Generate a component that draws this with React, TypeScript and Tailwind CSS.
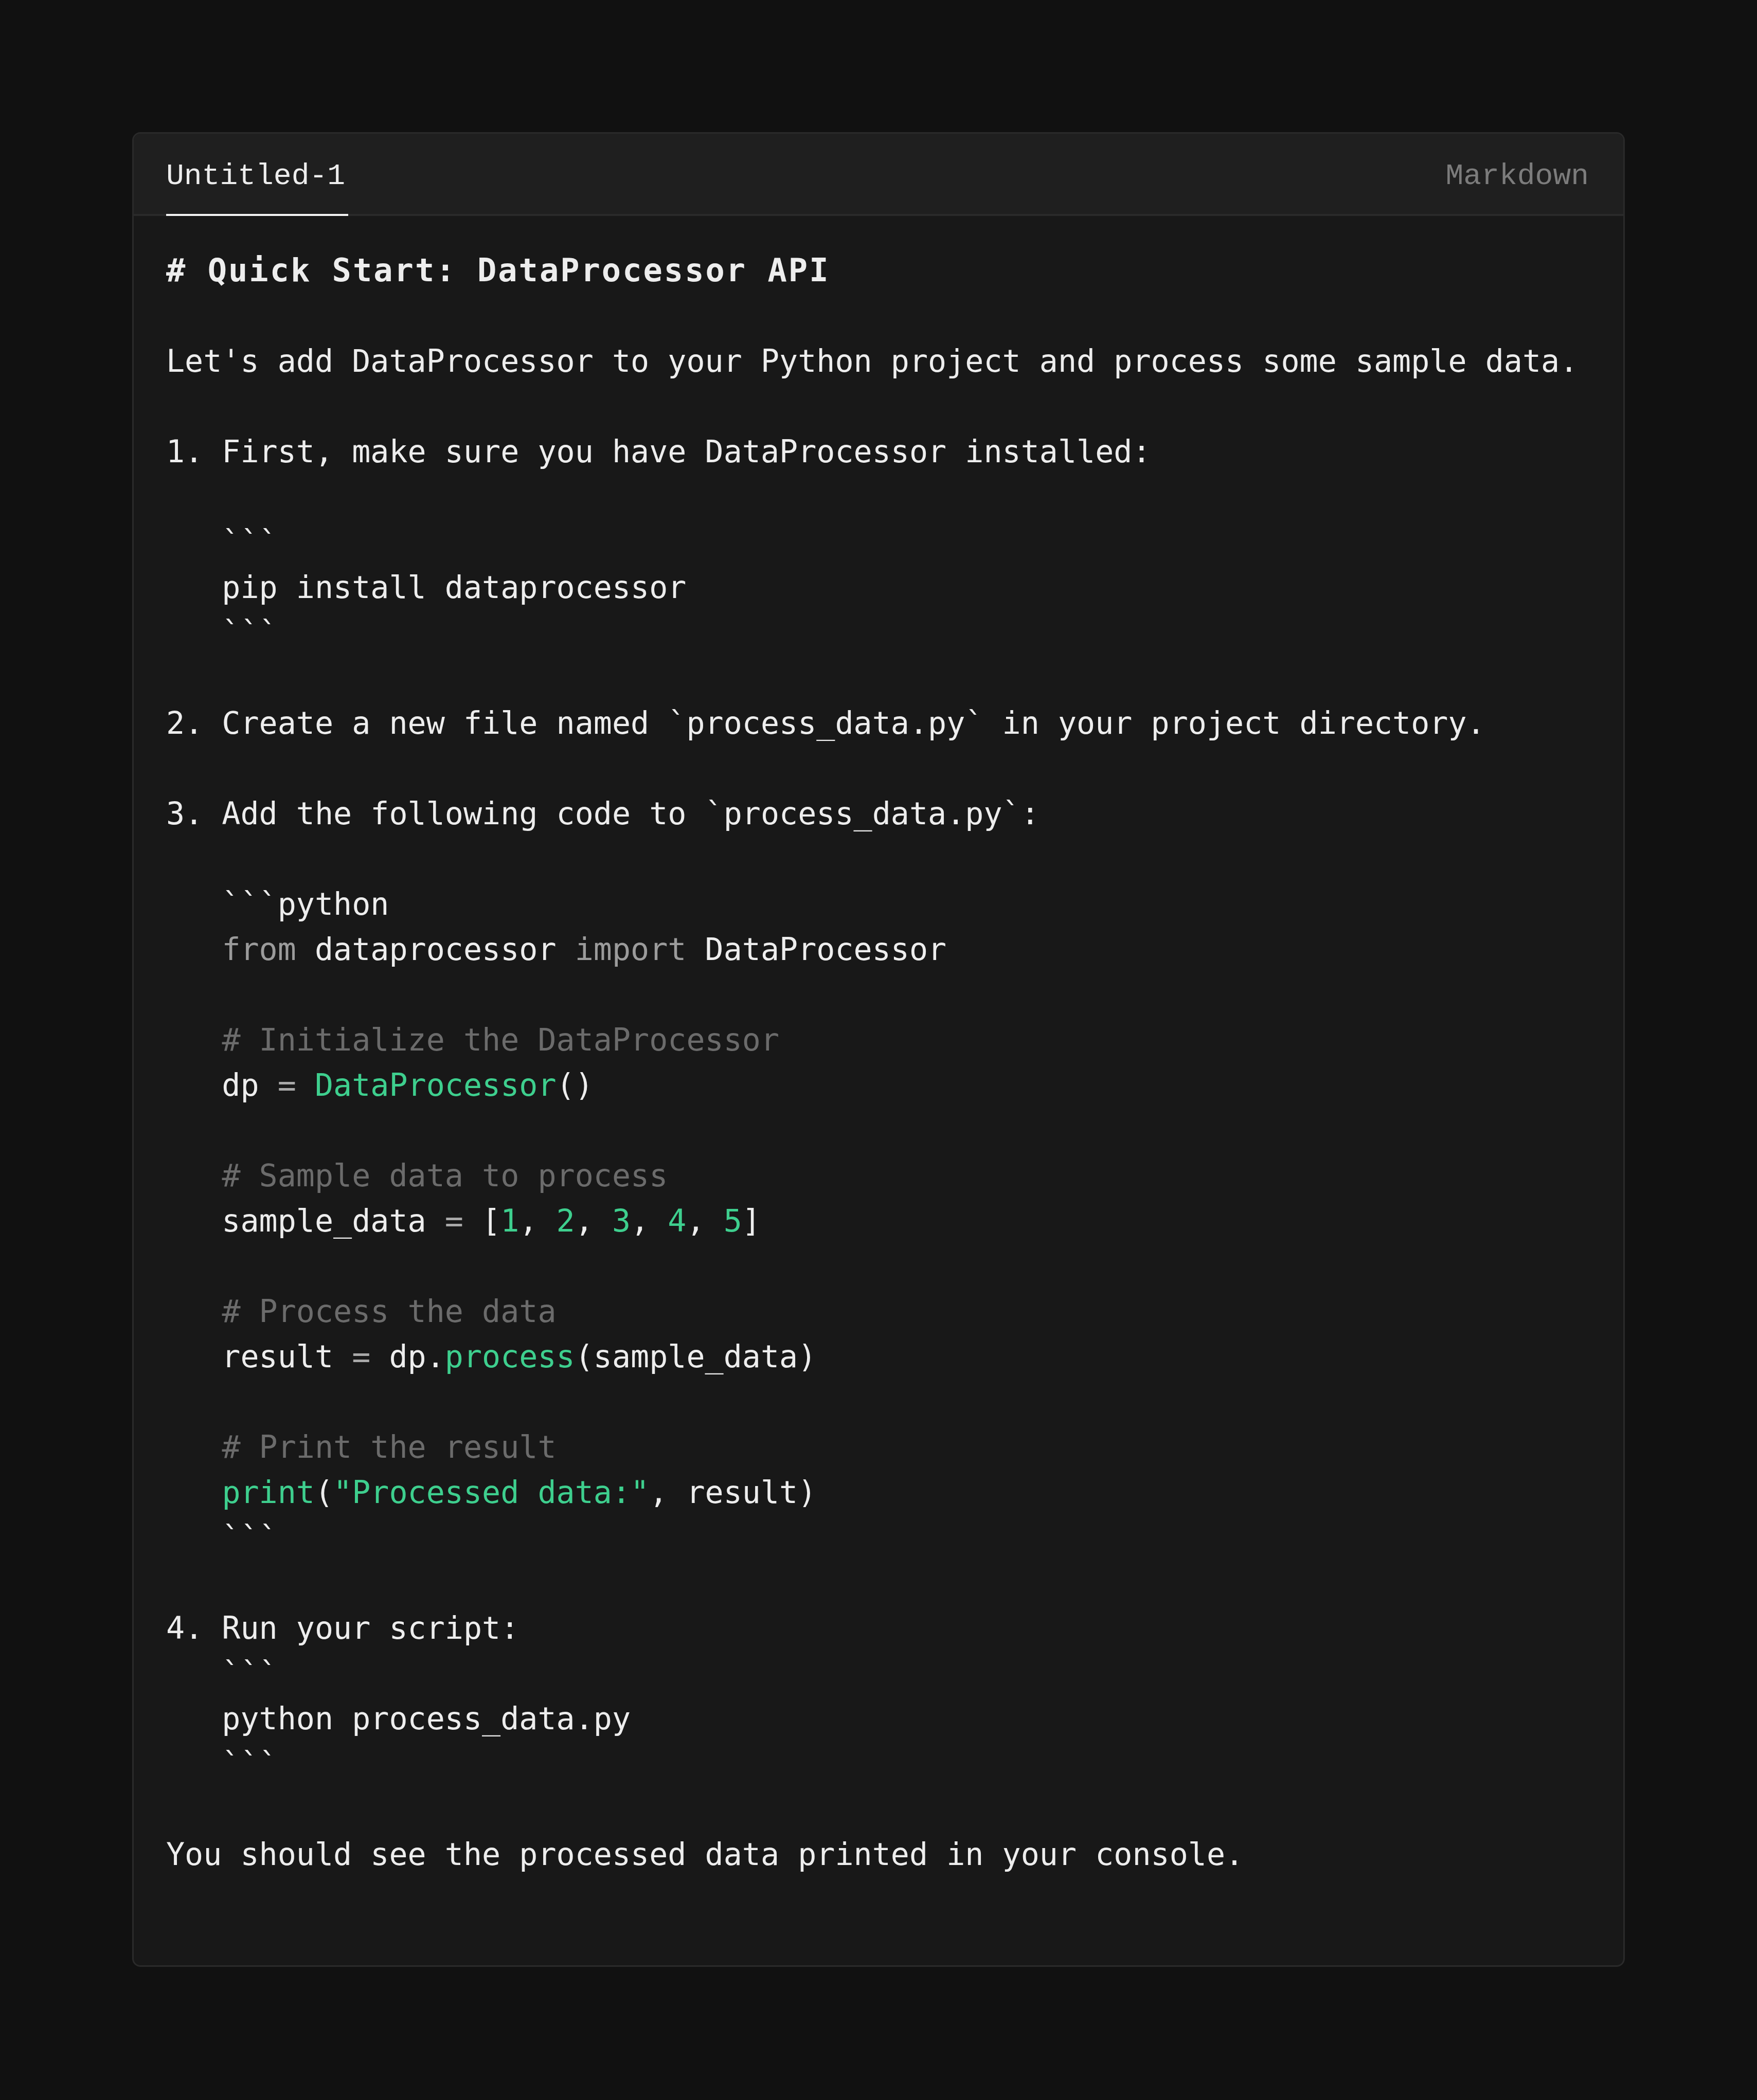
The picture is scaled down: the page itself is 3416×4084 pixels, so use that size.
import type { ReactNode } from "react";

const mono = "font-['DejaVu_Sans_Mono','Liberation_Mono',monospace]";
const courier = "font-['Liberation_Mono','Courier_New',monospace]";

const green = "text-[#3ecf8e]";
const comment = "text-[#6b6b6b]";
const keyword = "text-[#9b9b9b]";
const op = "text-[#a8a8a8]";

function Line({ children }: { children?: ReactNode }) {
  return <div className="h-[88px] whitespace-pre leading-[88px]">{children ?? " "}</div>;
}

function Tok({ c, children }: { c: string; children: ReactNode }) {
  return <span className={c}>{children}</span>;
}

export default function App() {
  return (
    <div className="min-h-screen bg-[#111111] p-[257px]">
      <div className="overflow-hidden rounded-[16px] border-[3px] border-[#2a2a2a] bg-[#181818]">
        <div className="flex h-[160px] items-stretch justify-between border-b-4 border-[#2a2a2a] bg-[#1f1f1f] px-[63px]">
          <div
            className={`-mb-1 flex items-center border-b-4 border-[#f2f2f2] pr-[6px] pt-[8px] text-[58px] text-[#ededed] ${courier}`}
          >
            Untitled-1
          </div>
          <div className={`flex items-center pr-[4px] pt-[8px] text-[58px] text-[#7c7c7c] ${courier}`}>
            Markdown
          </div>
        </div>

        <div className={`px-[63px] pb-[172px] pt-[62px] text-[60px] text-[#ededed] ${mono}`}>
          <div className="h-[88px] whitespace-pre text-[62px] font-bold leading-[88px] tracking-[3px]">
            # Quick Start: DataProcessor API
          </div>
          <Line />
          <Line>Let's add DataProcessor to your Python project and process some sample data.</Line>
          <Line />
          <Line>1. First, make sure you have DataProcessor installed:</Line>
          <Line />
          <Line>{"   ```"}</Line>
          <Line>{"   pip install dataprocessor"}</Line>
          <Line>{"   ```"}</Line>
          <Line />
          <Line>2. Create a new file named `process_data.py` in your project directory.</Line>
          <Line />
          <Line>3. Add the following code to `process_data.py`:</Line>
          <Line />
          <Line>{"   ```python"}</Line>
          <Line>
            {"   "}
            <Tok c={keyword}>from</Tok> dataprocessor <Tok c={keyword}>import</Tok> DataProcessor
          </Line>
          <Line />
          <Line>
            {"   "}
            <Tok c={comment}># Initialize the DataProcessor</Tok>
          </Line>
          <Line>
            {"   dp "}
            <Tok c={op}>=</Tok> <Tok c={green}>DataProcessor</Tok>()
          </Line>
          <Line />
          <Line>
            {"   "}
            <Tok c={comment}># Sample data to process</Tok>
          </Line>
          <Line>
            {"   sample_data "}
            <Tok c={op}>=</Tok> [<Tok c={green}>1</Tok>, <Tok c={green}>2</Tok>, <Tok c={green}>3</Tok>,{" "}
            <Tok c={green}>4</Tok>, <Tok c={green}>5</Tok>]
          </Line>
          <Line />
          <Line>
            {"   "}
            <Tok c={comment}># Process the data</Tok>
          </Line>
          <Line>
            {"   result "}
            <Tok c={op}>=</Tok> dp.<Tok c={green}>process</Tok>(sample_data)
          </Line>
          <Line />
          <Line>
            {"   "}
            <Tok c={comment}># Print the result</Tok>
          </Line>
          <Line>
            {"   "}
            <Tok c={green}>print</Tok>(<Tok c={green}>"Processed data:"</Tok>, result)
          </Line>
          <Line>{"   ```"}</Line>
          <Line />
          <Line>4. Run your script:</Line>
          <Line>{"   ```"}</Line>
          <Line>{"   python process_data.py"}</Line>
          <Line>{"   ```"}</Line>
          <Line />
          <Line>You should see the processed data printed in your console.</Line>
        </div>
      </div>
    </div>
  );
}
